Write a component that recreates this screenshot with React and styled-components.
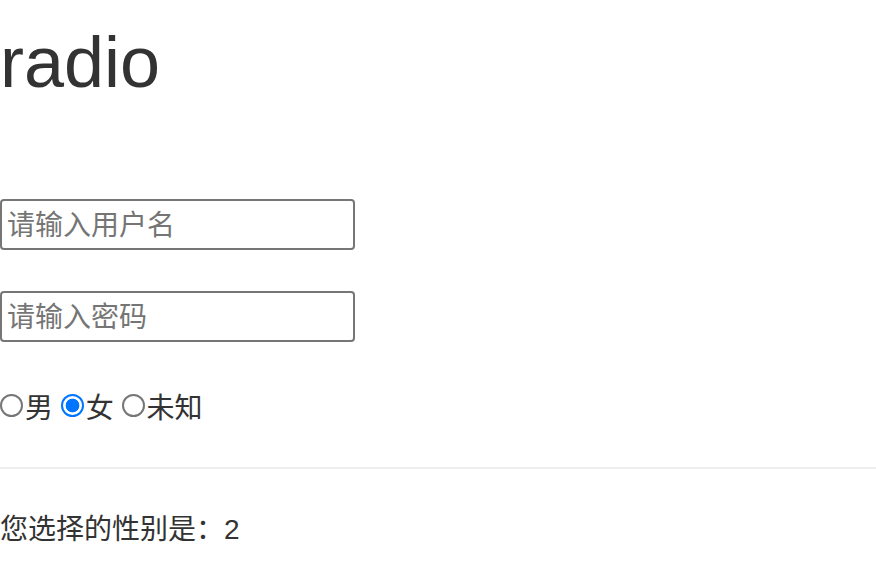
import { useState } from 'react'
import styled, { createGlobalStyle } from 'styled-components'

const GlobalStyle = createGlobalStyle`
  html, body {
    margin: 0;
    padding: 0;
    background: #fff;
  }
  body {
    font-family: "Liberation Sans", "Noto Sans CJK SC", Arial, sans-serif;
    color: #333;
  }
`

const genders = [
  { value: '1', label: '男' },
  { value: '2', label: '女' },
  { value: '3', label: '未知' },
]

export default function App() {
  const [sex, setSex] = useState('2')

  return (
    <Page>
      <GlobalStyle />
      <Title>radio</Title>
      <Field type="text" placeholder="请输入用户名" $first />
      <Field type="password" placeholder="请输入密码" />
      <RadioRow>
        {genders.map((g, i) => (
          <span key={g.value}>
            <RadioLabel>
              <Radio
                type="radio"
                name="sex"
                value={g.value}
                checked={sex === g.value}
                onChange={e => setSex(e.target.value)}
              />
              {g.label}
            </RadioLabel>
            {i < genders.length - 1 ? ' ' : ''}
          </span>
        ))}
      </RadioRow>
      <Divider />
      <Result>您选择的性别是：{sex}</Result>
    </Page>
  )
}

const Page = styled.div`
  display: flex;
  flex-direction: column;
  align-items: flex-start;
  width: 100%;
`
const Title = styled.h1`
  margin: 22px 0 0;
  font-family: "Liberation Sans", Arial, sans-serif;
  font-size: 72px;
  font-weight: 400;
  line-height: 80px;
  color: #333;
`
const Field = styled.input`
  box-sizing: border-box;
  width: 355px;
  height: 51px;
  margin: ${({ $first }) => ($first ? '97px' : '41px')} 0 0;
  padding: 2px 5px 0;
  border: 2px solid #767676;
  border-radius: 4px;
  font-family: "Liberation Sans", "Noto Sans CJK SC", sans-serif;
  font-size: 28px;
  color: #333;
  outline: none;
  &::placeholder {
    color: #757575;
  }
`
const RadioRow = styled.div`
  height: 40px;
  margin-top: 45px;
  display: flex;
  align-items: center;
  font-size: 28px;
  line-height: 40px;
  white-space: pre;
  color: #333;
`
const RadioLabel = styled.label`
  display: inline-flex;
  align-items: center;
  font-family: "Noto Sans CJK SC", sans-serif;
`
const Radio = styled.input`
  appearance: none;
  box-sizing: border-box;
  width: 23px;
  height: 23px;
  margin: 0 2px 0 0;
  border: 2px solid #767676;
  border-radius: 50%;
  background: #fff;
  cursor: pointer;
  &:checked {
    border-color: #0075ff;
    background: radial-gradient(circle, #0075ff 0 6.5px, #fff 7.2px);
  }
`
const Divider = styled.hr`
  align-self: stretch;
  margin: 40px 0 0;
  border: 0;
  border-top: 2px solid #eee;
`
const Result = styled.div`
  margin-top: 41px;
  font-size: 28px;
  line-height: 40px;
  color: #333;
`
